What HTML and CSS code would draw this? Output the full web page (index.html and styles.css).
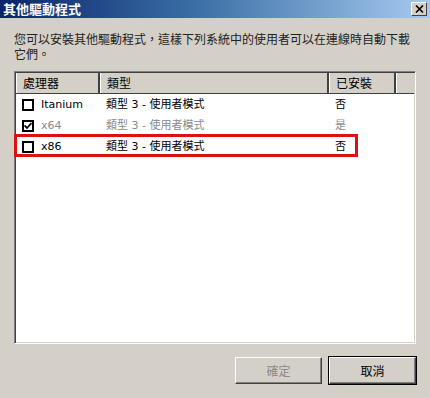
FILE: index.html
```html
<!DOCTYPE html>
<html lang="zh-Hant">
  <head>
    <meta charset="UTF-8" />
    <title>其他驅動程式</title>
    <link rel="stylesheet" href="styles.css">
  </head>
  <body>
    <div id="dialog">
      <div class="titlebar">
        <span class="title">其他驅動程式</span>
        <span class="close_btn">
          <svg width="9" height="8" viewBox="0 0 9 8"><path d="M1 0.5 L8 7.5 M8 0.5 L1 7.5" stroke="#000" stroke-width="1.6" fill="none"/></svg>
        </span>
      </div>
      <p class="desc">您可以安裝其他驅動程式，這樣下列系統中的使用者可以在連線時自動下載它們。</p>
      <div class="listbox">
        <div class="header">
          <div class="col col_cpu">處理器</div>
          <div class="col col_type">類型</div>
          <div class="col col_inst">已安裝</div>
          <div class="col col_rest"></div>
        </div>
        <div class="row">
          <div class="cell col_cpu"><span class="check"></span>Itanium</div>
          <div class="cell col_type">類型 3 - 使用者模式</div>
          <div class="cell col_inst">否</div>
        </div>
        <div class="row disabled">
          <div class="cell col_cpu"><span class="check checked">
            <svg width="8" height="8" viewBox="0 0 8 8"><path d="M0.5 3.5 L3 6 L7.5 1" stroke="#000" stroke-width="1.8" fill="none"/></svg>
          </span>x64</div>
          <div class="cell col_type">類型 3 - 使用者模式</div>
          <div class="cell col_inst">是</div>
        </div>
        <div class="row">
          <div class="cell col_cpu"><span class="check"></span>x86</div>
          <div class="cell col_type">類型 3 - 使用者模式</div>
          <div class="cell col_inst">否</div>
        </div>
        <div class="highlight"></div>
      </div>
      <div class="buttons">
        <button type="button" class="btn" disabled>確定</button>
        <button type="button" class="btn btn_default">取消</button>
      </div>
    </div>
  </body>
</html>
```

FILE: styles.css
```css
* {
  margin: 0;
  padding: 0;
  box-sizing: border-box;
}

body {
  background-color: #d4d0c8;
  font-family: "DejaVu Sans", "Noto Sans CJK TC", sans-serif;
  font-size: 12px;
  color: #000;
}

#dialog {
  width: 430px;
  height: 398px;
  overflow: hidden;
}

.titlebar {
  height: 18px;
  background: linear-gradient(to right, #0a246a 0%, #3a6ea5 45%, #a6caf0 100%);
  display: flex;
  align-items: center;
  justify-content: space-between;
  padding: 0 3px 0 3px;
}

.title {
  color: #fff;
  font-family: "Noto Sans CJK TC", sans-serif;
  font-weight: bold;
  font-size: 13px;
  line-height: 18px;
}

.close_btn {
  width: 16px;
  height: 14px;
  background-color: #d4d0c8;
  border-top: 1px solid #fff;
  border-left: 1px solid #fff;
  border-right: 1px solid #404040;
  border-bottom: 1px solid #404040;
  display: flex;
  align-items: center;
  justify-content: center;
}

.desc {
  margin: 13px 14px 0 14px;
  font-family: "Noto Sans CJK TC", sans-serif;
  font-size: 12px;
  line-height: 15px;
  color: #222;
}

.listbox {
  position: relative;
  margin: 10px 14px 0 14px;
  height: 273px;
  background-color: #fff;
  border-top: 1px solid #808080;
  border-left: 1px solid #808080;
  border-right: 1px solid #fff;
  border-bottom: 1px solid #fff;
  box-shadow: inset 1px 1px 0 #404040, inset -1px -1px 0 #d4d0c8;
  padding: 1px;
}

.header {
  display: flex;
  height: 21px;
  background-color: #d4d0c8;
  border-bottom: 1px solid #404040;
}

.header .col {
  border-left: 1px solid #fff;
  border-right: 2px solid #404040;
  padding-left: 6px;
  line-height: 20px;
  font-family: "Noto Sans CJK TC", sans-serif;
  font-size: 12px;
}

.col_cpu {
  width: 84px;
}

.col_type {
  width: 229px;
}

.col_inst {
  width: 67px;
}

.header .col_rest {
  width: 18px;
  border-right: none;
}

.row {
  display: flex;
  height: 21px;
  align-items: center;
}

.cell {
  display: flex;
  align-items: center;
  padding-left: 6px;
  font-size: 11px;
  line-height: 21px;
  white-space: nowrap;
}

.disabled .cell {
  color: #8a8a8a;
}

.check {
  width: 12px;
  height: 12px;
  border: 2px solid #000;
  background-color: #fff;
  margin-right: 7px;
  display: flex;
  align-items: center;
  justify-content: center;
}

.highlight {
  position: absolute;
  left: -1px;
  top: 62px;
  width: 344px;
  height: 23px;
  border: 3px solid #de1010;
}

.buttons {
  display: flex;
  justify-content: flex-end;
  gap: 7px;
  margin: 13px 14px 0 0;
}

.btn {
  width: 87px;
  height: 27px;
  background-color: #d4d0c8;
  border-top: 1px solid #fff;
  border-left: 1px solid #fff;
  border-right: 1px solid #404040;
  border-bottom: 1px solid #404040;
  box-shadow: inset -1px -1px 0 #808080;
  font-family: "Noto Sans CJK TC", sans-serif;
  font-size: 12px;
  color: #000;
}

.btn:disabled {
  color: #8a8a8a;
}

.btn_default {
  outline: 1px solid #000;
  outline-offset: 0;
}
```
